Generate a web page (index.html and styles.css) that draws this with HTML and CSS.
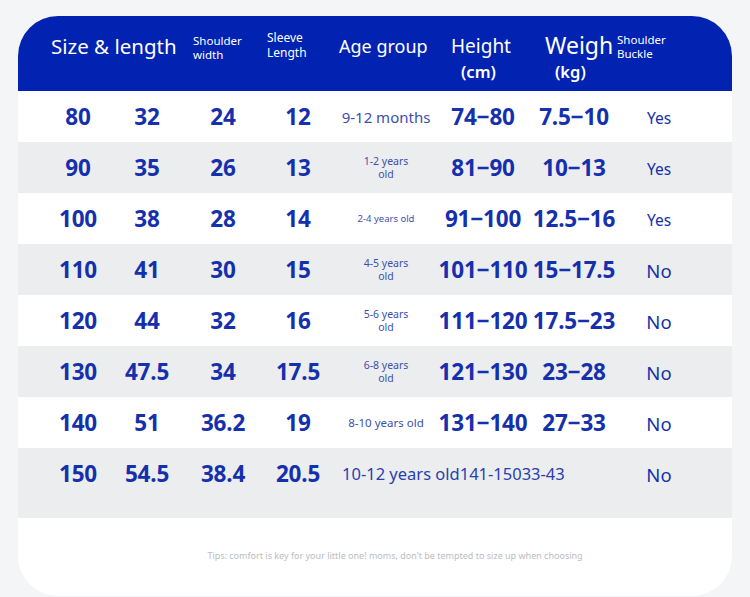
FILE: index.html
```html
<!DOCTYPE html>
<html>
<head>
<meta charset="utf-8">
<link rel="stylesheet" href="styles.css">
</head>
<body>
<div class="card">
  <div class="head">
    <div class="h h1">Size &amp; length</div>
    <div class="h h2 small">Shoulder<br>width</div>
    <div class="h h3 small2">Sleeve<br>Length</div>
    <div class="h h4">Age group</div>
    <div class="h h5"><span class="ht">Height</span><span class="unit">(cm)</span></div>
    <div class="h h6"><span class="wt">Weigh</span><span class="unit kg">(kg)</span></div>
    <div class="h h7 small">Shoulder<br>Buckle</div>
  </div>
  <div class="table">
    <div class="row">
      <div class="c num">80</div><div class="c num">32</div><div class="c num">24</div><div class="c num">12</div>
      <div class="c age age-l">9-12 months</div><div class="c num">74−80</div><div class="c num">7.5−10</div><div class="c yn">Yes</div>
    </div>
    <div class="row alt">
      <div class="c num">90</div><div class="c num">35</div><div class="c num">26</div><div class="c num">13</div>
      <div class="c age age-s">1-2 years<br>old</div><div class="c num">81−90</div><div class="c num">10−13</div><div class="c yn">Yes</div>
    </div>
    <div class="row">
      <div class="c num">100</div><div class="c num">38</div><div class="c num">28</div><div class="c num">14</div>
      <div class="c age age-xs">2-4 years old</div><div class="c num">91−100</div><div class="c num">12.5−16</div><div class="c yn">Yes</div>
    </div>
    <div class="row alt">
      <div class="c num">110</div><div class="c num">41</div><div class="c num">30</div><div class="c num">15</div>
      <div class="c age age-s">4-5 years<br>old</div><div class="c num">101−110</div><div class="c num">15−17.5</div><div class="c yn no">No</div>
    </div>
    <div class="row">
      <div class="c num">120</div><div class="c num">44</div><div class="c num">32</div><div class="c num">16</div>
      <div class="c age age-s">5-6 years<br>old</div><div class="c num">111−120</div><div class="c num">17.5−23</div><div class="c yn no">No</div>
    </div>
    <div class="row alt">
      <div class="c num">130</div><div class="c num">47.5</div><div class="c num">34</div><div class="c num">17.5</div>
      <div class="c age age-s">6-8 years<br>old</div><div class="c num">121−130</div><div class="c num">23−28</div><div class="c yn no">No</div>
    </div>
    <div class="row">
      <div class="c num">140</div><div class="c num">51</div><div class="c num">36.2</div><div class="c num">19</div>
      <div class="c age age-m">8-10 years old</div><div class="c num">131−140</div><div class="c num">27−33</div><div class="c yn no">No</div>
    </div>
    <div class="row alt last">
      <div class="c num">150</div><div class="c num">54.5</div><div class="c num">38.4</div><div class="c num">20.5</div>
      <div class="c span">10-12 years old141-15033-43</div><div class="c yn no">No</div>
    </div>
  </div>
  <div class="tip">Tips: comfort is key for your little one! moms, don't be tempted to size up when choosing</div>
</div>
</body>
</html>
```

FILE: styles.css
```css
* { box-sizing: border-box; }
html, body { margin: 0; padding: 0; }
body {
  background: #f4f5f7;
  font-family: "Noto Sans", "Open Sans", sans-serif;
  width: 750px;
  height: 597px;
  overflow: hidden;
}
.card {
  margin: 16px 18px 0;
  width: 714px;
  height: 580px;
  background: #fff;
  border-radius: 40px;
  overflow: hidden;
}
.head {
  background: #0223b2;
  height: 75px;
  display: flex;
  align-items: flex-start;
  padding-left: 33px;
  color: #fff;
}
.h { white-space: nowrap; }
.h1 { width: 142px; font-size: 20.5px; line-height: 24px; padding-top: 18px; }
.h2 { width: 74px; }
.h3 { width: 72px; }
.small { font-size: 11.5px; line-height: 14px; padding-top: 18px; }
.small2 { font-size: 12px; line-height: 15px; padding-top: 14px; }
.h4 { width: 112px; font-size: 18px; line-height: 24px; padding-top: 18px; }
.h5 { width: 94px; display: flex; flex-direction: column; align-items: flex-start; padding-top: 18px; }
.ht { font-size: 19px; line-height: 25px; }
.unit { font-size: 16.5px; font-weight: 600; line-height: 26px; padding-left: 10px; }
.h6 { width: 72px; display: flex; flex-direction: column; align-items: flex-start; padding-top: 15px; }
.wt { font-size: 23px; line-height: 28px; }
.unit.kg { padding-left: 10px; line-height: 26px; }
.h7 { padding-top: 17px; font-size: 11.5px; }

.table { display: flex; flex-direction: column; }
.row {
  display: grid;
  grid-template-columns: 60px 78px 74px 76px 100px 94px 88px 82px;
  padding-left: 30px;
  padding-right: 32px;
  height: 51px;
  align-items: center;
  color: #1530ad;
}
.row.alt { background: #ecedee; }
.row.last { height: 70px; align-items: start; grid-template-columns: 60px 78px 74px 76px 282px 82px; }
.row.last .c { height: 51px; display: flex; align-items: center; justify-content: center; }
.c { text-align: center; white-space: nowrap; }
.num { font-size: 22.5px; font-weight: 700; letter-spacing: -0.2px; }
.age { color: #3c4fae; }
.age-l { font-size: 15px; }
.age-s { font-size: 10.5px; line-height: 13px; }
.age-xs { font-size: 9.5px; }
.age-m { font-size: 11.5px; }
.yn { font-size: 15.5px; padding-top: 2px; }
.yn.no { font-size: 18.5px; }
.row.last .span { justify-content: flex-start; padding-left: 6px; font-size: 16.5px; color: #2a3eae; }
.tip {
  margin-top: 31px;
  padding-left: 40px;
  text-align: center;
  font-size: 9px;
  color: #babdc2;
}
```
